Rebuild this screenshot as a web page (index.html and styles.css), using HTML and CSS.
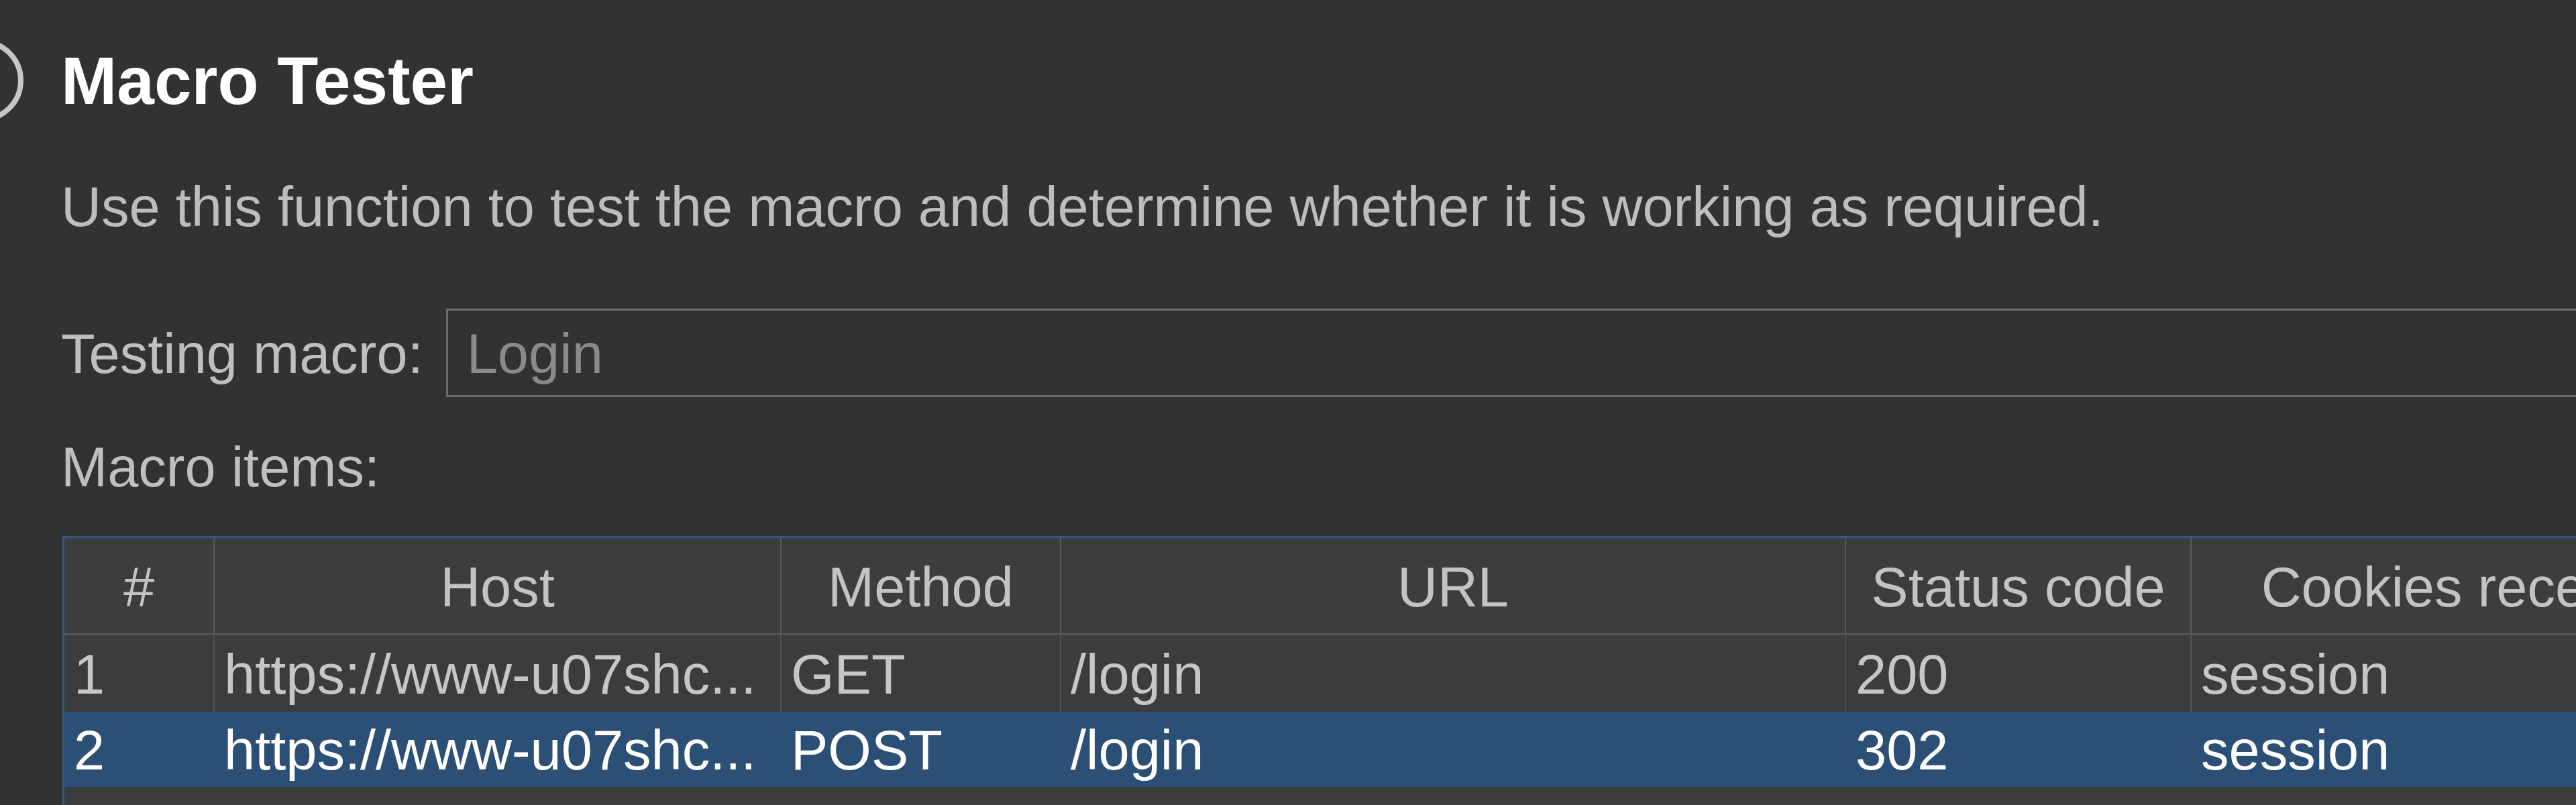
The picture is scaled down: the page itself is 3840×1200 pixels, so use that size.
FILE: index.html
```html
<!DOCTYPE html>
<html lang="en">
<head>
<meta charset="utf-8">
<title>Macro Tester</title>
<link rel="stylesheet" href="styles.css">
</head>
<body>
<div class="page">
  <div class="title-row">
    <svg class="help-icon" viewBox="0 0 36 124" aria-hidden="true">
      <circle cx="-27" cy="62" r="58" fill="none" stroke="#c6c6c6" stroke-width="8"/>
    </svg>
    <h1 class="title">Macro Tester</h1>
  </div>
  <p class="desc">Use this function to test the macro and determine whether it is working as required.</p>
  <div class="field-row">
    <span class="field-label">Testing macro:</span>
    <div class="field">Login</div>
  </div>
  <div class="items-label">Macro items:</div>
  <div class="table">
    <div class="row thead">
      <div class="cell">#</div>
      <div class="cell">Host</div>
      <div class="cell">Method</div>
      <div class="cell">URL</div>
      <div class="cell">Status code</div>
      <div class="cell">Cookies received</div>
    </div>
    <div class="row item">
      <div class="cell">1</div>
      <div class="cell">https://www-u07shc...</div>
      <div class="cell">GET</div>
      <div class="cell">/login</div>
      <div class="cell">200</div>
      <div class="cell">session</div>
    </div>
    <div class="row item selected">
      <div class="cell">2</div>
      <div class="cell">https://www-u07shc...</div>
      <div class="cell">POST</div>
      <div class="cell">/login</div>
      <div class="cell">302</div>
      <div class="cell">session</div>
    </div>
  </div>
</div>
</body>
</html>
```
FILE: styles.css
```css
html, body {
  margin: 0;
  padding: 0;
  height: 1200px;
  overflow: hidden;
  background: #313234;
}

body {
  font-family: "Liberation Sans", Arial, sans-serif;
}

.page {
  display: flex;
  flex-direction: column;
  height: 1200px;
  box-sizing: border-box;
  padding: 64px 0 0 91px;
}

.title-row {
  display: flex;
  align-items: center;
  height: 112px;
}

.help-icon {
  flex: none;
  width: 36px;
  height: 124px;
  margin-left: -91px;
  margin-right: 55px;
}

.title {
  margin: 0;
  font-size: 100px;
  line-height: 112px;
  font-weight: bold;
  color: #ffffff;
  white-space: nowrap;
}

.desc {
  margin: 85px 0 0;
  font-size: 83px;
  line-height: 96px;
  color: #bdbdbd;
  white-space: nowrap;
}

.field-row {
  margin-top: 103px;
  margin-right: -60px;
  display: flex;
  align-items: center;
  gap: 34px;
  height: 132px;
}

.field-label {
  font-size: 83px;
  line-height: 96px;
  padding-top: 4px;
  color: #bfbfbf;
  white-space: nowrap;
}

.field {
  flex: 1;
  height: 132px;
  box-sizing: border-box;
  border: 3px solid #6b6b6b;
  padding: 4px 0 0 28px;
  display: flex;
  align-items: center;
  font-size: 83px;
  line-height: 96px;
  color: #8a8a8a;
}

.items-label {
  margin-top: 57px;
  font-size: 83px;
  line-height: 96px;
  color: #bfbfbf;
  white-space: nowrap;
}

.table {
  margin-top: 54px;
  margin-left: 2px;
  flex: 1;
  align-self: flex-start;
  width: max-content;
  background: #3b3c3e;
  border-top: 3px solid #2f5885;
  border-left: 3px solid #2f5885;
}

.row {
  display: grid;
  grid-template-columns: 224px 845px 417px 1170px 515px 846px;
}

.cell {
  display: flex;
  align-items: center;
  box-sizing: border-box;
  padding: 0 14px;
  border-right: 2px solid #515255;
  font-size: 83px;
  line-height: 96px;
  white-space: nowrap;
  overflow: hidden;
}

.thead {
  height: 142px;
  background: #3c3d3f;
  border-bottom: 3px solid #555658;
}

.thead .cell {
  justify-content: center;
  padding-top: 6px;
  color: #c3c3c3;
  border-right-color: #58595b;
}

.item {
  height: 114px;
}

.item .cell {
  padding-top: 4px;
  color: #c6c6c6;
}

.item.selected {
  height: 112px;
  background: #2c4f75;
}

.item.selected .cell {
  color: #ffffff;
  border-right-color: #2c4f75;
}
```
